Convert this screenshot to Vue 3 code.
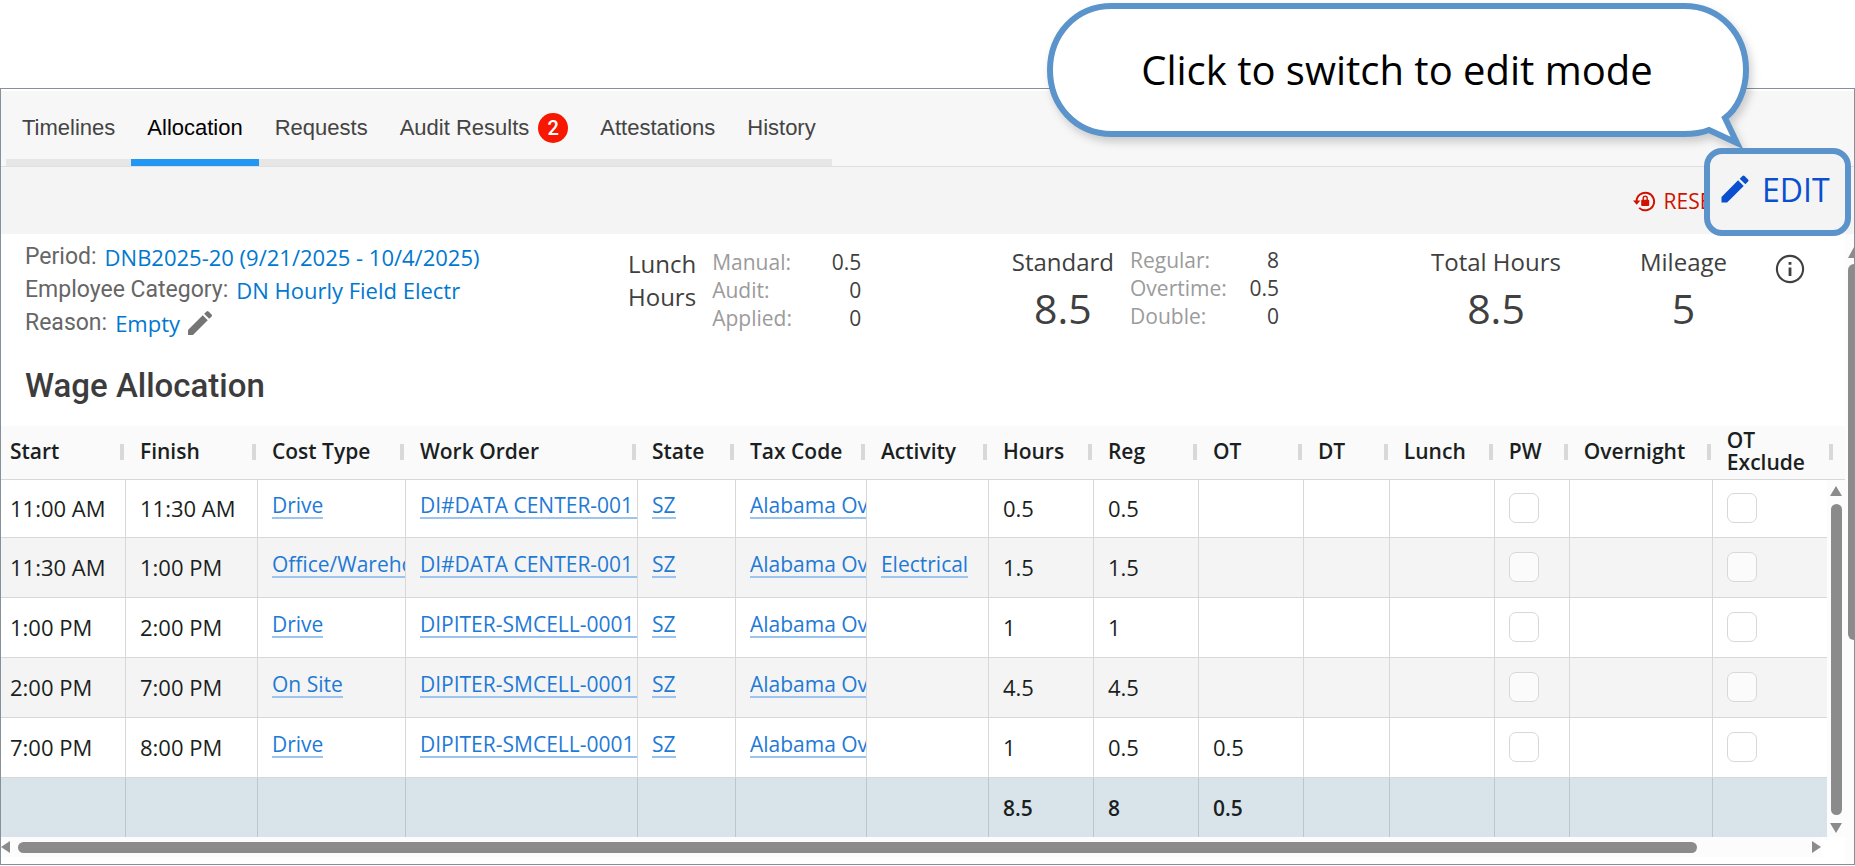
<script setup>
const tabs = [
  { label: 'Timelines' },
  { label: 'Allocation', active: true },
  { label: 'Requests' },
  { label: 'Audit Results', badge: 2 },
  { label: 'Attestations' },
  { label: 'History' },
]

const lunch = [
  ['Manual:', '0.5'],
  ['Audit:', '0'],
  ['Applied:', '0'],
]
const standard = [
  ['Regular:', '8'],
  ['Overtime:', '0.5'],
  ['Double:', '0'],
]

const columns = [
  { key: 'start', label: 'Start', width: 125 },
  { key: 'finish', label: 'Finish', width: 132 },
  { key: 'cost', label: 'Cost Type', width: 148, link: true },
  { key: 'order', label: 'Work Order', width: 232, link: true, fill: true },
  { key: 'state', label: 'State', width: 98, link: true },
  { key: 'tax', label: 'Tax Code', width: 131, link: true },
  { key: 'activity', label: 'Activity', width: 122, link: true },
  { key: 'hours', label: 'Hours', width: 105 },
  { key: 'reg', label: 'Reg', width: 105 },
  { key: 'ot', label: 'OT', width: 105 },
  { key: 'dt', label: 'DT', width: 86 },
  { key: 'lunch', label: 'Lunch', width: 105 },
  { key: 'pw', label: 'PW', width: 75, check: true },
  { key: 'overnight', label: 'Overnight', width: 143 },
  { key: 'exclude', label: 'OT Exclude', width: 114, check: true },
]
const total = columns.reduce((sum, c) => sum + c.width, 0)

const rows = [
  { start: '11:00 AM', finish: '11:30 AM', cost: 'Drive', order: 'DI#DATA CENTER-001', state: 'SZ', tax: 'Alabama Ove', hours: '0.5', reg: '0.5' },
  { start: '11:30 AM', finish: '1:00 PM', cost: 'Office/Wareho', order: 'DI#DATA CENTER-001', state: 'SZ', tax: 'Alabama Ove', activity: 'Electrical', hours: '1.5', reg: '1.5' },
  { start: '1:00 PM', finish: '2:00 PM', cost: 'Drive', order: 'DIPITER-SMCELL-0001', state: 'SZ', tax: 'Alabama Ove', hours: '1', reg: '1' },
  { start: '2:00 PM', finish: '7:00 PM', cost: 'On Site', order: 'DIPITER-SMCELL-0001', state: 'SZ', tax: 'Alabama Ove', hours: '4.5', reg: '4.5' },
  { start: '7:00 PM', finish: '8:00 PM', cost: 'Drive', order: 'DIPITER-SMCELL-0001', state: 'SZ', tax: 'Alabama Ove', hours: '1', reg: '0.5', ot: '0.5' },
]
const totals = { hours: '8.5', reg: '8', ot: '0.5' }
</script>

<template>
  <div class="page">
    <main class="panel">
      <nav class="tabs" aria-label="Timecard sections">
        <div class="tab-list">
          <button v-for="t in tabs" :key="t.label" type="button" class="tab" :class="{ active: t.active }">
            {{ t.label }}<span v-if="t.badge" class="badge">{{ t.badge }}</span>
          </button>
        </div>
      </nav>

      <div class="toolbar">
        <button type="button" class="reset">
          <svg width="24" height="24" viewBox="0 0 24 24" fill="none" stroke="currentColor" aria-hidden="true">
            <path d="M4.5 12.5A8.8 8.8 0 1 1 7.2 18.9" stroke-width="2" />
            <path d="M1 11.6h7.4L4.7 15.8z" fill="currentColor" stroke="none" />
            <rect x="9.2" y="10.8" width="8" height="6.2" rx="1" fill="currentColor" stroke="none" />
            <path d="M11.2 11V9.2a2 2 0 0 1 4 0V11" stroke-width="1.4" />
          </svg>
          RESET
        </button>
      </div>

      <div class="body">
        <div class="content">
          <section class="summary">
            <dl class="facts">
              <div><dt>Period:</dt><dd><a href="#">DNB2025-20 (9/21/2025 - 10/4/2025)</a></dd></div>
              <div><dt>Employee Category:</dt><dd><a href="#">DN Hourly Field Electr</a></dd></div>
              <div>
                <dt>Reason:</dt>
                <dd>
                  <a href="#">Empty</a>
                  <button type="button" class="pencil" aria-label="Edit reason">
                    <svg width="32" height="32" viewBox="0 0 24 24" fill="currentColor" aria-hidden="true">
                      <path d="M3 17.25V21h3.75L17.81 9.94l-3.75-3.75L3 17.25zM20.71 7.04a1 1 0 0 0 0-1.41l-2.34-2.34a1 1 0 0 0-1.41 0l-1.83 1.83 3.75 3.75 1.83-1.83z" />
                    </svg>
                  </button>
                </dd>
              </div>
            </dl>

            <div class="group lunch">
              <div class="caption">Lunch<br />Hours</div>
              <dl class="split">
                <div v-for="[k, v] in lunch" :key="k"><dt>{{ k }}</dt><dd>{{ v }}</dd></div>
              </dl>
            </div>

            <div class="group standard">
              <div class="metric"><span class="caption">Standard</span><span class="big">8.5</span></div>
              <dl class="split">
                <div v-for="[k, v] in standard" :key="k"><dt>{{ k }}</dt><dd>{{ v }}</dd></div>
              </dl>
            </div>

            <div class="metric total"><span class="caption">Total Hours</span><span class="big">8.5</span></div>
            <div class="metric mileage"><span class="caption">Mileage</span><span class="big">5</span></div>
            <button type="button" class="info" aria-label="Details">
              <svg width="34" height="34" viewBox="0 0 24 24" fill="currentColor" aria-hidden="true">
                <path d="M11 7h2v2h-2zm0 4h2v6h-2zm1-9C6.48 2 2 6.48 2 12s4.48 10 10 10 10-4.48 10-10S17.52 2 12 2zm0 18.5c-4.7 0-8.5-3.8-8.5-8.5S7.3 3.5 12 3.5s8.5 3.8 8.5 8.5-3.8 8.5-8.5 8.5z" />
              </svg>
            </button>
          </section>

          <h2>Wage Allocation</h2>

          <div class="grid">
            <div class="scroller">
              <table>
                <colgroup>
                  <col v-for="c in columns" :key="c.key" :style="{ width: (c.width / total) * 100 + '%' }" />
                </colgroup>
                <thead>
                  <tr>
                    <th v-for="c in columns" :key="c.key" scope="col">{{ c.label }}</th>
                  </tr>
                </thead>
                <tbody>
                  <tr v-for="(r, i) in rows" :key="i">
                    <td v-for="c in columns" :key="c.key" :class="{ linked: c.link, checked: c.check, fill: c.fill }">
                      <input v-if="c.check" type="checkbox" :aria-label="c.label + ', row ' + (i + 1)" />
                      <a v-else-if="c.link && r[c.key]" href="#">{{ r[c.key] }}</a>
                      <template v-else>{{ r[c.key] }}</template>
                    </td>
                  </tr>
                </tbody>
                <tfoot>
                  <tr>
                    <td v-for="c in columns" :key="c.key">{{ totals[c.key] }}</td>
                  </tr>
                </tfoot>
              </table>
            </div>
            <div class="side">
              <div class="corner"></div>
              <div class="vbar">
                <svg width="12" height="10" viewBox="0 0 12 10" aria-hidden="true"><path d="M6 0 12 10H0z" /></svg>
                <span class="thumb"></span>
                <svg width="12" height="10" viewBox="0 0 12 10" aria-hidden="true"><path d="M0 0h12L6 10z" /></svg>
              </div>
            </div>
          </div>

          <div class="hbar">
            <svg width="10" height="12" viewBox="0 0 10 12" aria-hidden="true"><path d="M9 0v12L0 6z" /></svg>
            <span class="rail"><span class="thumb"></span></span>
            <svg width="10" height="12" viewBox="0 0 10 12" aria-hidden="true"><path d="M1 0v12l9-6z" /></svg>
          </div>
        </div>

        <div class="outer-bar">
          <svg width="6" height="12" viewBox="0 0 6 12" aria-hidden="true"><path d="M6 0v11H0z" /></svg>
          <span class="thumb"></span>
        </div>
      </div>
    </main>

    <div class="callout">
      <svg width="720" height="166" viewBox="0 0 720 166" aria-hidden="true">
        <path d="M71 6H643C680 6 705 35 705 70C705 91 696 109 684 118L696 143L668 130Q658 134 643 134H71C34 134 9 105 9 70C9 35 34 6 71 6Z" />
      </svg>
      <p>Click to switch to edit mode</p>
    </div>

    <button type="button" class="edit">
      <svg width="36" height="36" viewBox="0 0 24 24" fill="currentColor" aria-hidden="true">
        <path d="M3 17.25V21h3.75L17.81 9.94l-3.75-3.75L3 17.25zM20.71 7.04a1 1 0 0 0 0-1.41l-2.34-2.34a1 1 0 0 0-1.41 0l-1.83 1.83 3.75 3.75 1.83-1.83z" />
      </svg>
      EDIT
    </button>
  </div>
</template>

<style>
body {
  margin: 0;
  background: #fff;
}
</style>

<style scoped>
* {
  box-sizing: border-box;
}
.page {
  position: relative;
  padding-top: 88px;
  font-family: "Open Sans", "Noto Sans", sans-serif;
  font-size: 22px;
  color: #1b1f22;
}
button {
  border: 0;
  background: none;
  padding: 0;
  font: inherit;
  cursor: pointer;
}
dl, dd, dt, h2, p {
  margin: 0;
}
a {
  text-decoration: none;
}
.panel {
  border: 1px solid #87909a;
  padding-top: 2px;
  background: #fff;
}

/* tabs */
.tabs {
  background: #f7f7f7;
  border-bottom: 1px solid #dfdfdf;
  padding-left: 5px;
}
.tab-list {
  display: inline-flex;
  vertical-align: top;
}
.tab {
  display: flex;
  align-items: center;
  height: 75px;
  padding: 6px 16px 0;
  border-bottom: 7px solid #e6e6e6;
  font-family: "Liberation Sans", Arial, sans-serif;
  font-size: 22px;
  color: #444;
}
.tab.active {
  color: #000;
  border-bottom-color: #2196f3;
}
.badge {
  display: grid;
  place-items: center;
  width: 30px;
  height: 30px;
  margin-left: 9px;
  border-radius: 15px;
  background: #f81700;
  color: #fff;
  font-family: Roboto, sans-serif;
  font-weight: 500;
  font-size: 20px;
}

/* toolbar */
.toolbar {
  display: flex;
  justify-content: flex-end;
  align-items: center;
  height: 67px;
  padding-right: 131px;
  background: #f4f4f4;
}
.reset {
  display: flex;
  align-items: center;
  gap: 8px;
  font-size: 21px;
  color: #cf1100;
}

.body {
  display: flex;
}
.content {
  flex: 1;
  min-width: 0;
}

/* summary */
.summary {
  display: flex;
  align-items: flex-start;
  padding: 6px 38px 0 24px;
}
.facts {
  flex: 0 0 603px;
}
.facts div {
  display: flex;
  align-items: center;
  height: 33px;
  gap: 8px;
}
.facts dt {
  font-family: Roboto, sans-serif;
  font-size: 23px;
  color: #666;
}
.facts dd {
  display: flex;
  align-items: center;
  gap: 4px;
}
.facts a {
  color: #0078d0;
}
.pencil {
  display: flex;
  color: #757575;
}
.group {
  display: flex;
  gap: 16px;
}
.caption {
  font-size: 24px;
  line-height: 33px;
  color: #404040;
}
.lunch .caption {
  padding-top: 7px;
}
.split {
  width: 149px;
  padding-top: 6px;
  font-size: 21px;
}
.lunch .split {
  padding-top: 8px;
}
.split div {
  display: flex;
  justify-content: space-between;
  line-height: 28px;
}
.split dt {
  color: #9b9b9b;
}
.split dd {
  color: #404040;
}
.standard {
  margin-left: auto;
}
.metric {
  display: flex;
  flex-direction: column;
  align-items: center;
  padding-top: 5px;
}
.big {
  font-size: 41px;
  line-height: 60px;
  color: #404040;
}
.total {
  margin-left: 152px;
}
.mileage {
  margin-left: 79px;
}
.info {
  display: flex;
  margin: 12px 0 0 46px;
  color: #404040;
}
h2 {
  padding: 0 24px;
  margin: 26px 0 19px;
  font-family: Roboto, sans-serif;
  font-weight: 500;
  font-size: 33px;
  line-height: 42px;
  color: #3c3c3c;
}

/* table */
.grid {
  display: flex;
}
.scroller {
  flex: 1;
  min-width: 0;
}
table {
  width: 100%;
  table-layout: fixed;
  border-collapse: separate;
  border-spacing: 0;
}
th, td {
  text-align: left;
  padding: 0 0 2px 14px;
  white-space: nowrap;
  overflow: hidden;
}
th:first-child, td:first-child {
  padding-left: 9px;
}
th {
  position: relative;
  height: 54px;
  padding-bottom: 4px;
  background: #fafafa;
  border-bottom: 1px solid #d8d8d8;
  font-weight: 600;
  font-size: 21px;
  line-height: 22px;
}
th:last-child {
  white-space: normal;
}
th:not(:last-child)::after, .corner::after {
  content: "";
  position: absolute;
  top: 18px;
  right: 2px;
  width: 4px;
  height: 16px;
  background: #d8d8d8;
}
td {
  height: 60px;
  border-right: 1px solid #d8d8d8;
  border-bottom: 1px solid #d8d8d8;
}
td:last-child {
  border-right: 0;
}
tbody tr:first-child td {
  height: 58px;
}
tbody tr:nth-child(even) {
  background: #f4f4f4;
}
.linked {
  padding-bottom: 9px;
}
.linked a {
  color: #1f7ad6;
  border-bottom: 2px solid #9cc4ee;
  display: inline-block;
  font-size: 21px;
  line-height: 24px;
}
.fill a {
  min-width: 100%;
}
.checked input {
  appearance: none;
  display: block;
  width: 30px;
  height: 30px;
  margin: 0;
  border: 1px solid #d8d8d8;
  border-radius: 7px;
  background: rgba(255, 255, 255, 0.6);
}
tfoot td {
  height: 59px;
  padding-bottom: 0;
  background: #d9e4ea;
  border-bottom: 0;
  border-right-color: #bcc7cd;
  font-weight: 600;
  font-size: 21px;
}

/* scroll bars */
.thumb {
  display: block;
  background: #8b8b8b;
  border-radius: 6px;
}
svg {
  flex: none;
}
.vbar svg, .hbar svg, .outer-bar svg {
  fill: #8b8b8b;
}
.side {
  display: flex;
  flex-direction: column;
  width: 18px;
}
.corner {
  position: relative;
  height: 54px;
  background: #fafafa;
  border-bottom: 1px solid #d8d8d8;
}
.corner::after {
  right: 12px;
}
.vbar {
  flex: 1;
  display: flex;
  flex-direction: column;
  align-items: center;
  gap: 8px;
  padding: 6px 0 4px;
  background: #fcfcfc;
}
.vbar .thumb {
  flex: 1;
  width: 11px;
}
.hbar {
  display: flex;
  align-items: center;
  height: 20px;
  margin: 0 24px 7px 0;
  gap: 7px;
  background: #fcfcfc;
}
.rail {
  flex: 1;
}
.rail .thumb {
  width: 94%;
  height: 11px;
}
.outer-bar {
  display: flex;
  flex-direction: column;
  align-items: flex-end;
  gap: 5px;
  width: 9px;
  padding-top: 13px;
  background: #fcfcfc;
}
.outer-bar .thumb {
  width: 6px;
  height: 376px;
  border-radius: 6px 0 0 6px;
}

/* annotation */
.callout {
  position: absolute;
  top: 0;
  right: 94px;
  width: 720px;
}
.callout svg {
  display: block;
  overflow: visible;
  filter: drop-shadow(3px 5px 4px rgba(0, 0, 0, 0.18));
}
.callout path {
  fill: #fff;
  stroke: #5b93cb;
  stroke-width: 6;
}
.callout p {
  position: absolute;
  top: 0;
  left: 0;
  right: 8px;
  text-align: center;
  font-size: 40px;
  line-height: 140px;
  color: #000;
}
.edit {
  position: absolute;
  top: 148px;
  right: 4px;
  display: flex;
  align-items: center;
  gap: 9px;
  width: 147px;
  height: 88px;
  padding: 0 0 6px 7px;
  border: 6px solid #5b93cb;
  border-radius: 18px;
  background: #f4f4f4;
  color: #0a4fd0;
  font-size: 32px;
}
</style>
